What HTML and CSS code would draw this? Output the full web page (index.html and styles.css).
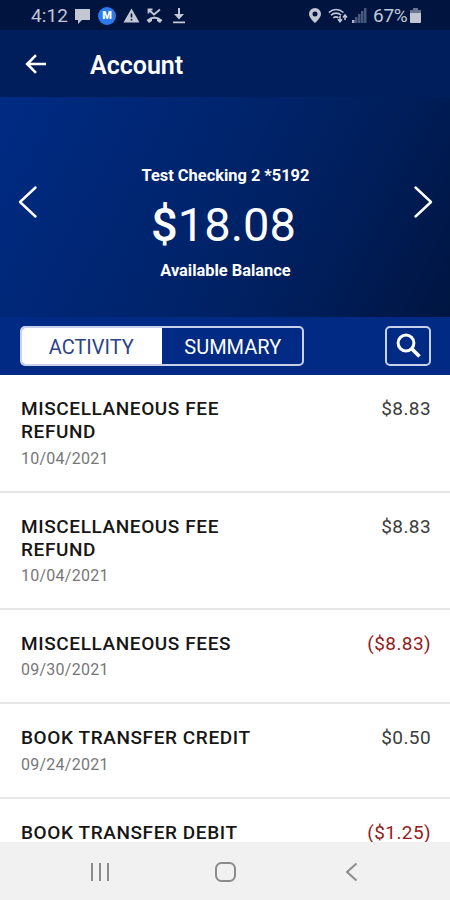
FILE: index.html
```html
<!DOCTYPE html>
<html lang="en">
<head>
<meta charset="utf-8">
<title>Account</title>
<link rel="stylesheet" href="styles.css">
</head>
<body>
<div class="phone">
  <div class="status">
    <div class="status-left">
      <span class="time">4:12</span>
      <svg class="i-chat" width="17" height="16" viewBox="0 0 17 16"><path fill="currentColor" d="M1 1h15v11H8l-4 4v-4H1z"/></svg>
      <span class="badge">M</span>
      <svg class="i-warn" width="17" height="15" viewBox="0 0 17 15"><path fill="currentColor" d="M8.500 .5 16.500 14.500H.5z"/><path stroke="#001440" stroke-width="1.600" d="M8.500 5.500v4M8.500 11v1.600"/></svg>
      <svg class="i-missed" width="17" height="16" viewBox="0 0 17 16" fill="none" stroke="currentColor"><path stroke-width="1.800" d="M2.500 5.500V1.500H6.500M3 2l5 4.500L14 1.500"/><path fill="currentColor" stroke="none" d="M.5 12Q8.500 5 16.500 12L14 15l-3-2v-2Q8.500 10.300 6 11v2L3 15z"/></svg>
      <svg class="i-down" width="14" height="16" viewBox="0 0 14 16"><path fill="currentColor" d="M6 0h2v6h4l-5 5.500L2 6h4zM1 13.500h12v1.800H1z"/></svg>
    </div>
    <div class="status-right">
      <svg width="12" height="15" viewBox="0 0 12 15"><path fill="currentColor" fill-rule="evenodd" d="M6 0a6 6 0 0 1 6 6c0 4-6 9-6 9S0 10 0 6a6 6 0 0 1 6-6zm0 3.500a2.500 2.500 0 1 0 0 5 2.500 2.500 0 0 0 0-5z"/></svg>
      <svg class="i-wifi" width="20" height="15" viewBox="0 0 20 15" fill="none" stroke="currentColor" stroke-width="1.600"><path d="M.8 4.500Q8 -1.500 15.500 4.500M3 7.200Q8 3 13.200 7.200M5.300 9.900Q8 7.700 10.500 9.900"/><path stroke-width="1.500" d="M12 8v5M10 11.200l2 2.500 2-2.500M17 12V7.500M15 9.500l2-2.500 2 2.500"/></svg>
      <svg class="i-signal" width="15" height="15" viewBox="0 0 15 15"><path fill="#aeb4c6" d="M0 12h2.500v3H0z"/><path fill="#48577c" d="M3 9h2.500v6H3zM6 6h2.500v9H6zM9 3h2.500v12H9zM12 0h2.500v15H12z"/></svg>
      <span class="percent">67%</span>
      <svg class="i-batt" width="11" height="15" viewBox="0 0 11 15"><path fill="#68758f" d="M3 0h5v2h3v4H0V2h3z"/><path fill="currentColor" d="M0 5h11v9a1 1 0 0 1-1 1H1a1 1 0 0 1-1-1z"/></svg>
    </div>
  </div>
  <header class="bar">
    <svg width="22" height="20" viewBox="0 0 22 20" fill="none" stroke="#fff" stroke-width="2.600"><path d="M21 10H2.500M11 1.200 2.200 10 11 18.800"/></svg>
    <h1>Account</h1>
  </header>
  <section class="hero">
    <svg width="20" height="34" viewBox="0 0 20 34" fill="none" stroke="#fff" stroke-width="2.400" stroke-linecap="round" stroke-linejoin="round"><path d="M17.500 2.500 2 17l15.500 14.500"/></svg>
    <div class="balance">
      <div class="label">Test Checking 2 *5192</div>
      <div class="amount"><span>$</span>18.08</div>
      <div class="label">Available Balance</div>
    </div>
    <svg width="20" height="34" viewBox="0 0 20 34" fill="none" stroke="#fff" stroke-width="2.400" stroke-linecap="round" stroke-linejoin="round"><path d="M2.500 2.500 18 17 2.500 31.500"/></svg>
  </section>
  <nav class="tabs">
    <div class="segments"><div class="seg active">ACTIVITY</div><div class="seg">SUMMARY</div></div>
    <div class="search"><svg width="26" height="26" viewBox="0 0 26 26" fill="none" stroke="#fff"><circle cx="11" cy="10" r="7.900" stroke-width="3"/><path stroke-width="3.800" d="m16.500 15.500 8 8"/></svg></div>
  </nav>
  <main class="list">
    <article class="row"><div><h2>MISCELLANEOUS FEE REFUND</h2><time>10/04/2021</time></div><span class="sum">$8.83</span></article>
    <article class="row"><div><h2>MISCELLANEOUS FEE REFUND</h2><time>10/04/2021</time></div><span class="sum">$8.83</span></article>
    <article class="row"><div><h2>MISCELLANEOUS FEES</h2><time>09/30/2021</time></div><span class="sum neg">($8.83)</span></article>
    <article class="row"><div><h2>BOOK TRANSFER CREDIT</h2><time>09/24/2021</time></div><span class="sum">$0.50</span></article>
    <article class="row last"><div><h2>BOOK TRANSFER DEBIT</h2></div><span class="sum neg">($1.25)</span></article>
  </main>
  <footer class="sysnav">
    <svg width="20" height="20" viewBox="0 0 20 20" stroke="#8b8b8b" stroke-width="2"><path d="M2 1v18M10 1v18M18 1v18"/></svg>
    <svg width="22" height="20" viewBox="0 0 22 20" fill="none" stroke="#8b8b8b" stroke-width="2"><rect x="1" y="1" width="19" height="18" rx="5.500"/></svg>
    <svg width="20" height="20" viewBox="0 0 20 20" fill="none" stroke="#8b8b8b" stroke-width="2"><path d="M15.500 1.500 6 10l9.500 8.500"/></svg>
  </footer>
</div>
</body>
</html>
```
FILE: styles.css
```css
* { box-sizing: border-box; }
body { margin: 0; font-family: Roboto, "Liberation Sans", sans-serif; }
h1, h2 { margin: 0; }
svg { display: block; flex: none; }
.phone { width: 450px; height: 900px; display: flex; flex-direction: column; overflow: hidden; background: #fff; }
.status { height: 30px; flex: none; background: #001440; color: #c3c7d4; display: flex; justify-content: space-between; padding: 1px 29px 0 31px; font-size: 19px; }
.status-left, .status-right { display: flex; align-items: center; }
.time { width: 37px; letter-spacing: .1px; }
.i-chat { margin-left: 6px; }
.badge { width: 18px; height: 18px; margin-left: 7px; border-radius: 50%; background: #2d7bea; color: #fff; font-size: 11px; font-weight: 900; line-height: 18px; text-align: center; }
.i-warn { margin-left: 7px; }
.i-missed { margin-left: 6px; }
.i-down { margin-left: 9px; }
.i-wifi { margin-left: 7px; }
.i-signal { margin-left: 4px; }
.percent { width: 35px; margin-left: 6px; letter-spacing: -.3px; }
.i-batt { margin-left: 2px; }
.bar { height: 67px; flex: none; background: #001e5c; display: flex; align-items: center; padding: 1px 25px 0; }
.bar h1 { margin: 3px 0 0 43px; color: #fff; font-size: 25px; font-weight: 600; line-height: 30px; }
.hero { height: 220px; flex: none; display: flex; align-items: center; justify-content: space-between; padding: 0 17px 11px 18px; background: linear-gradient(117deg, #002b84 0%, #00246c 45%, #001d58 75%, #001541 100%); color: #fff; }
.balance { display: flex; flex-direction: column; align-items: center; padding-top: 43px; }
.label { font-size: 16.400px; line-height: 20px; font-weight: 700; }
.amount { font-size: 47px; line-height: 56px; margin: 11px 4px 8px 0; }
.amount span { font-weight: 500; }
.tabs { height: 58px; flex: none; background: #002a83; display: flex; justify-content: space-between; align-items: center; padding: 0 19px 0 20px; }
.segments { width: 284px; height: 40px; display: flex; border: 2px solid #c9d1ea; border-radius: 5px; overflow: hidden; }
.seg { flex: 1; padding-left: 2px; color: #fff; font-size: 20px; line-height: 38px; text-align: center; }
.seg.active { padding: 0 1px 0 0; background: #fff; color: #2b4487; }
.search { width: 46px; height: 40px; display: flex; align-items: center; justify-content: center; border: 2px solid #c9d1ea; border-radius: 5px; }
.list { flex: 1; min-height: 0; overflow: hidden; }
.row { display: flex; justify-content: space-between; padding: 22px 19px 22px 21px; border-bottom: 2px solid #e6e6e6; }
.row.last { padding-bottom: 0; border-bottom: 0; }
.row h2 { width: 250px; color: #161616; font-size: 19px; font-weight: 500; line-height: 23.300px; letter-spacing: .6px; }
.row time { display: block; margin-top: 4px; color: #777; font-size: 16px; line-height: 21px; letter-spacing: .25px; }
.sum { color: #3c3c3c; font-size: 19px; line-height: 24px; letter-spacing: .4px; }
.neg { color: #951b20; }
.sysnav { height: 58px; flex: none; background: #f1f1f1; display: flex; justify-content: space-between; align-items: center; padding: 2px 89px 0 90px; }
```
